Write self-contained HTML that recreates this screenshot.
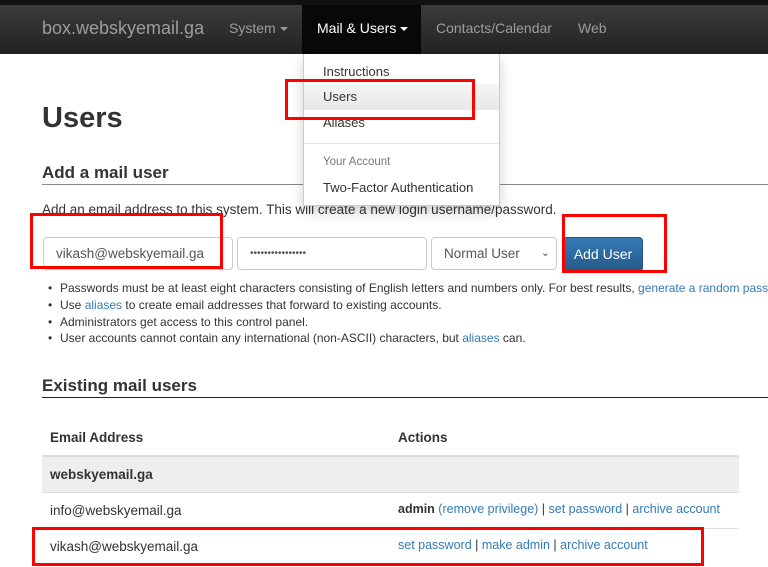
<!DOCTYPE html>
<html><head><style>
*{box-sizing:border-box;margin:0;padding:0}
body{width:768px;height:567px;overflow:hidden;background:#fff;font-family:"Liberation Sans",Arial,sans-serif;color:#333;position:relative}
.a{position:absolute;white-space:nowrap}
a{color:#337ab7;text-decoration:none}
.nav{position:absolute;left:0;top:0;width:768px;height:54px;background:linear-gradient(#3c3c3c,#222);border-top:5px solid #111}
.nav .a{color:#9d9d9d;font-size:14px;top:15px}
.caret{display:inline-block;border-top:4px solid;border-left:4px solid transparent;border-right:4px solid transparent;vertical-align:middle;margin-left:4px}
.inp{position:absolute;top:237px;height:33px;border:1px solid #ccc;border-radius:4px;font-size:13.5px;padding:8px 12px;color:#555}
.red{position:absolute;border:3px solid #f00}
li{position:absolute;left:60px;font-size:12px;list-style:none;white-space:nowrap}
li:before{content:"•";position:absolute;left:-12px}
</style></head><body>
<div class="nav">
<div class="a" style="left:42px;top:13px;font-size:18px">box.webskyemail.ga</div>
<div class="a" style="left:229px">System<span class="caret"></span></div>
<div style="position:absolute;left:302px;top:0;width:119px;height:49px;background:#080808"></div>
<div class="a" style="left:317px;color:#fff">Mail &amp; Users<span class="caret"></span></div>
<div class="a" style="left:436px">Contacts/Calendar</div>
<div class="a" style="left:578px">Web</div>
</div>
<div class="a" style="left:42px;top:102px;font-size:29px;font-weight:bold;color:#333">Users</div>
<div class="a" style="left:42px;top:163px;font-size:17px;font-weight:bold;color:#333">Add a mail user</div>
<div style="position:absolute;left:42px;top:184px;width:726px;height:1px;background:#888"></div>
<div class="a" style="left:42px;top:202px;font-size:13.5px">Add an email address to this system. This will create a new login username/password.</div>
<div class="inp" style="left:43px;width:190px">vikash@webskyemail.ga</div>
<div class="inp" style="left:237px;width:190px;font-size:10px;padding-top:10px">••••••••••••••••</div>
<div class="inp" style="left:431px;width:126px">Normal User <span style="position:absolute;right:6px;top:8px;font-size:11px">&#8964;</span></div>
<div style="position:absolute;left:563px;top:237px;width:80px;height:35px;border-radius:4px;background:linear-gradient(#337ab7,#265a88);border:1px solid #245580;color:#fff;font-size:14px;text-align:center;line-height:33px">Add User</div>
<ul>
<li style="top:281px">Passwords must be at least eight characters consisting of English letters and numbers only. For best results, <a>generate a random password</a></li>
<li style="top:298px">Use <a>aliases</a> to create email addresses that forward to existing accounts.</li>
<li style="top:315px">Administrators get access to this control panel.</li>
<li style="top:331px">User accounts cannot contain any international (non-ASCII) characters, but <a>aliases</a> can.</li>
</ul>
<div class="a" style="left:42px;top:376px;font-size:17px;font-weight:bold">Existing mail users</div>
<div style="position:absolute;left:42px;top:397px;width:726px;height:1px;background:#222"></div>
<div class="a" style="left:50px;top:430px;font-size:13.5px;font-weight:bold">Email Address</div>
<div class="a" style="left:398px;top:430px;font-size:13.5px;font-weight:bold">Actions</div>
<div style="position:absolute;left:42px;top:455px;width:697px;height:38px;background:#eee;border-top:2px solid #ddd;border-bottom:1px solid #ddd"></div>
<div class="a" style="left:50px;top:467px;font-size:13.5px;font-weight:bold">webskyemail.ga</div>
<div class="a" style="left:50px;top:503px;font-size:13.5px">info@webskyemail.ga</div>
<div class="a" style="left:398px;top:502px;font-size:12.5px"><b>admin</b> <a>(remove privilege)</a> | <a>set password</a> | <a>archive account</a></div>
<div style="position:absolute;left:42px;top:528px;width:697px;height:1px;background:#ddd"></div>
<div class="a" style="left:50px;top:539px;font-size:13.5px">vikash@webskyemail.ga</div>
<div class="a" style="left:398px;top:538px;font-size:12.5px"><a>set password</a> | <a>make admin</a> | <a>archive account</a></div>
<div style="position:absolute;left:303px;top:54px;width:197px;height:152px;background:#fff;border:1px solid #ccc;border-top:none;box-shadow:0 6px 12px rgba(0,0,0,.18)">
<div class="a" style="left:19px;top:10px;font-size:13px">Instructions</div>
<div style="position:absolute;left:0;top:30px;width:195px;height:26px;background:linear-gradient(#f5f5f5,#e8e8e8)"></div>
<div class="a" style="left:19px;top:35px;font-size:13px">Users</div>
<div class="a" style="left:19px;top:61px;font-size:13px">Aliases</div>
<div style="position:absolute;left:0;top:89px;width:195px;height:1px;background:#e5e5e5"></div>
<div class="a" style="left:19px;top:102px;font-size:11.5px;color:#777">Your Account</div>
<div class="a" style="left:19px;top:126px;font-size:13px">Two-Factor Authentication</div>
</div>
<div class="red" style="left:285px;top:79px;width:190px;height:41px"></div>
<div class="red" style="left:30px;top:213px;width:193px;height:56px"></div>
<div class="red" style="left:562px;top:214px;width:105px;height:59px"></div>
<div class="red" style="left:32px;top:527px;width:672px;height:39px"></div>
</body></html>
